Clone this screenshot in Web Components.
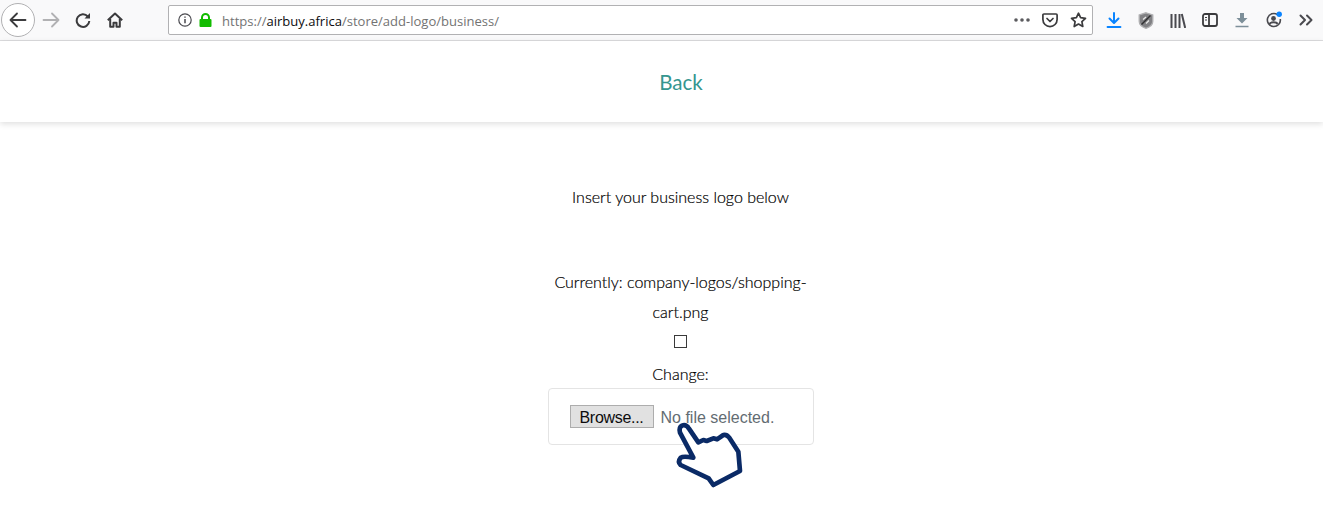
<!DOCTYPE html>
<html>
<head>
<meta charset="utf-8">
<title>Add logo</title>
<style>
  body { margin: 0; padding: 0; background: #fff; }
</style>
</head>
<body>
<browser-toolbar url-host="airbuy.africa" url-path="/store/add-logo/business/"></browser-toolbar>
<site-nav>Back</site-nav>
<logo-form heading="Insert your business logo below"></logo-form>

<script>
// @ts-check

class BrowserToolbar extends HTMLElement {
  constructor() {
    super();
    this._root = this.attachShadow({ mode: "open" });
    const host = this.getAttribute("url-host");
    const path = this.getAttribute("url-path");
    this._root.innerHTML = `
      <style>
        :host {
          display: flex;
          align-items: center;
          height: 40px;
          box-sizing: content-box;
          background: #f9f9fa;
          border-bottom: 1px solid #dcdcde;
          font-family: "Open Sans", "Noto Sans", sans-serif;
        }
        svg { display: block; fill: none; }
        .btn {
          width: 32px;
          height: 32px;
          display: flex;
          align-items: center;
          justify-content: center;
          flex: none;
        }
        #back {
          width: 34px;
          height: 34px;
          margin: 0 0 0 1px;
          box-sizing: border-box;
          border: 1px solid #b1b1b3;
          border-radius: 50%;
          background: #fff;
          display: flex;
          align-items: center;
          justify-content: center;
          flex: none;
        }
        #url {
          flex: 1;
          height: 30px;
          margin: 0 0 0 37px;
          box-sizing: border-box;
          background: #fff;
          border: 1px solid #b1b1b3;
          border-radius: 2px;
          display: flex;
          align-items: center;
          padding-left: 9px;
          padding-right: 0;
          font-size: 13.040px;
          color: #737373;
        }
        #url .text { flex: 1; margin-left: 10px; padding-top: 2px; white-space: nowrap; }
        #url b { font-weight: 400; color: #0c0c0d; }
        #url .in { width: 28px; height: 28px; display: flex; align-items: center; justify-content: center; flex: none; }
        #tools { display: flex; margin-left: 5px; margin-right: 1px; }
      </style>
      <div id="back">
        <svg width="18" height="18" viewBox="0 0 18 18" stroke="#3b3b3d" stroke-width="1.800" stroke-linecap="round" stroke-linejoin="round"><path d="M16.500 9H1.500M8 2.500 1.500 9 8 15.500"/></svg>
      </div>
      <div class="btn">
        <svg width="18" height="18" viewBox="0 0 18 18" stroke="#b1b1b3" stroke-width="1.800" stroke-linecap="round" stroke-linejoin="round"><path d="M1.500 9h15M10 2.500 16.500 9 10 15.500"/></svg>
      </div>
      <div class="btn">
        <svg width="16" height="16" viewBox="0 0 16 16" stroke="#3b3b3d" stroke-width="2" stroke-linejoin="round"><path d="M12.800 4.500A6.300 6.300 0 1 0 14.300 9"/><path d="M15 1v5.500H9.500z" fill="#3b3b3d" stroke="none"/></svg>
      </div>
      <div class="btn">
        <svg width="16" height="16" viewBox="0 0 16 16" stroke="#3b3b3d" stroke-width="2" stroke-linejoin="round"><path d="M.800 8.200 8 1.500l7.200 6.700"/><path d="M3.200 7v7.800h3.300V10.800h3v4h3.300V7"/></svg>
      </div>
      <div id="url">
        <svg width="14" height="14" viewBox="0 0 14 14" stroke="#4a4a4f" stroke-width="1.200"><circle cx="7" cy="7" r="6.200"/><path d="M7 6v4.300M7 3.400v1.400" stroke-width="1.500"/></svg>
        <svg style="margin-left:7px" width="13" height="14" viewBox="0 0 13 14"><path d="M3 6V4.500a3.500 3.500 0 0 1 7 0V6" stroke="#12bc00" stroke-width="2"/><rect x="0.500" y="6" width="12" height="8" rx="1" fill="#12bc00"/></svg>
        <span class="text">https://<b>${host}</b>${path}</span>
        <div class="in">
          <svg width="16" height="4" viewBox="0 0 16 4"><circle cx="2" cy="2" r="1.800" fill="#5b5b5f"/><circle cx="8" cy="2" r="1.800" fill="#5b5b5f"/><circle cx="14" cy="2" r="1.800" fill="#5b5b5f"/></svg>
        </div>
        <div class="in">
          <svg width="16" height="15" viewBox="0 0 16 15" stroke="#3b3b3d" stroke-width="1.700" stroke-linecap="round" stroke-linejoin="round"><path d="M1.900 1h12.200a1 1 0 0 1 1 1v4.500a7.100 7.100 0 0 1-14.200 0V2a1 1 0 0 1 1-1z"/><path d="M5 5.500 8 8.500l3-3"/></svg>
        </div>
        <div class="in">
          <svg width="17" height="16" viewBox="0 0 17 16" stroke="#3b3b3d" stroke-width="1.700" stroke-linejoin="round"><path d="M8.500 1.200 10.600 5.700l4.900.6-3.600 3.300.9 4.900-4.300-2.400-4.300 2.400.9-4.900L1.500 6.300l4.900-.6z"/></svg>
        </div>
      </div>
      <div id="tools">
        <div class="btn">
          <svg width="16" height="16" viewBox="0 0 16 16" stroke="#0a84ff" stroke-width="2" stroke-linecap="round" stroke-linejoin="round"><path d="M8 1v9.500M3.500 6.500 8 11l4.500-4.500"/><path d="M1.500 15h13" stroke-width="1.800"/></svg>
        </div>
        <div class="btn">
          <svg width="16" height="17" viewBox="0 0 16 17"><path d="M8 .8 14.800 3v6.200c0 3.500-3.200 5.900-6.800 7.100-3.600-1.200-6.800-3.600-6.800-7.100V3z" fill="#808083" stroke="#b0b0b2" stroke-width="1.300"/><path d="M3.500 12.500 12.500 3.500" stroke="#2f2f31" stroke-width="1.500" fill="none"/><path d="M5 7.500 8 5M8 11.500l3-3" stroke="#e8e8e8" stroke-width="1.200" fill="none"/></svg>
        </div>
        <div class="btn">
          <svg width="16" height="15" viewBox="0 0 16 15" stroke="#4a4a4f" stroke-width="2"><path d="M1.500 1v14M5.500 1v14M9.500 1v14M11.800 1l3.400 14"/></svg>
        </div>
        <div class="btn">
          <svg width="16" height="14" viewBox="0 0 16 14" stroke="#3b3b3d" stroke-width="1.800"><rect x="1" y="1" width="14" height="12" rx="2"/><path d="M7 1v12"/><path d="M3 4.500h2M3 7h2" stroke-width="1.200"/></svg>
        </div>
        <div class="btn">
          <svg width="16" height="16" viewBox="0 0 16 16"><path d="M6 1h4v5h3.500L8 11.500 2.500 6H6z" fill="#7d8f99"/><path d="M1.500 14.500h13" stroke="#7d8f99" stroke-width="1.500"/></svg>
        </div>
        <div class="btn">
          <svg width="18" height="18" viewBox="0 0 18 18" stroke="#4a4a4f" stroke-width="1.600"><path d="M12.500 3.600A6.500 6.500 0 1 0 15.300 8"/><circle cx="8.500" cy="7.500" r="2.400" fill="#4a4a4f" stroke="none"/><path d="M4.500 13c1-2.300 7-2.300 8 0" stroke-width="2"/><circle cx="14.200" cy="3.300" r="2.700" fill="#0a84ff" stroke="none"/></svg>
        </div>
        <div class="btn">
          <svg width="14" height="12" viewBox="0 0 14 12" stroke="#4a4a4f" stroke-width="2" stroke-linecap="round" stroke-linejoin="round"><path d="M1.500 1.500 6 6l-4.500 4.500M8 1.500 12.500 6 8 10.500"/></svg>
        </div>
      </div>`;
  }
}

class SiteNav extends HTMLElement {
  constructor() {
    super();
    this._root = this.attachShadow({ mode: "open" });
    this._root.innerHTML = `
      <style>
        :host {
          display: flex;
          justify-content: center;
          align-items: center;
          height: 81px;
          padding-left: 39px;
          background: #fff;
          box-shadow: 0 2px 6px rgba(0,0,0,0.13);
          position: relative;
        }
        a {
          font: 20.600px Lato, "Open Sans", sans-serif;
          color: #35968f;
          text-decoration: none;
        }
      </style>
      <a href="#"><slot></slot></a>`;
  }
}

class FileField extends HTMLElement {
  constructor() {
    super();
    this._root = this.attachShadow({ mode: "open" });
    this._root.innerHTML = `
      <style>
        :host {
          display: flex;
          align-items: center;
          position: relative;
          box-sizing: border-box;
          width: 266px;
          height: 57px;
          padding: 0 21px;
          background: #fff;
          border: 1px solid #e4e4e4;
          border-radius: 4px;
          font: 16px "Liberation Sans", Arial, sans-serif;
          -webkit-text-stroke: 0;
          text-align: left;
        }
        button {
          width: 84px;
          height: 23px;
          margin: 0 7px 0 0;
          padding: 2px 0 0;
          font: inherit;
          letter-spacing: -0.3px;
          color: #0c0c0d;
          background: #e1e1e1;
          border: 1px solid #adadad;
          border-radius: 0;
        }
        span { color: #636c72; white-space: nowrap; padding-top: 2px; }
        svg { position: absolute; left: 111px; top: 21px; fill: #fff; overflow: visible; }
      </style>
      <button type="button">Browse...</button><span>No file selected.</span>
      <svg width="95" height="85" viewBox="0 0 285 255" stroke="#0a2a66" stroke-width="14" stroke-linejoin="round" stroke-linecap="round">
        <path d="M60 68Q56 52 66 47Q78 42 87 56L115 97L130 90L140 93L160 85L171 88L190 75Q200 73 207 82L235 125L240 183L160 225L146 205L62 165Q52 155 62 143Q70 138 100 143Z"/>
      </svg>`;
  }
}

class LogoForm extends HTMLElement {
  constructor() {
    super();
    this._root = this.attachShadow({ mode: "open" });
    this._root.innerHTML = `
      <style>
        :host {
          display: flex;
          flex-direction: column;
          align-items: center;
          padding: 0 0 72px 38px;
          font: 300 16px/30px Lato, "Open Sans", sans-serif;
          -webkit-text-stroke: 0.2px #000;
          color: #000;
          text-align: center;
        }
        #heading { margin: 60px 0 55px; }
        #current { width: 266px; }
        input {
          appearance: none;
          display: block;
          width: 13px;
          height: 13px;
          margin: 8px 0 9px;
          background: #fff;
          border: 1px solid #3a3a3a;
          border-radius: 0;
        }
        #change { margin-bottom: -1px; padding-top: 2px; }
      </style>
      <div id="heading"></div>
      <div id="current">Currently: company-logos/shopping-cart.png</div>
      <input type="checkbox">
      <div id="change">Change:</div>
      <file-field></file-field>`;
    this._root.querySelector("#heading").textContent = this.getAttribute("heading");
  }
}

window.customElements.define("browser-toolbar", BrowserToolbar);
window.customElements.define("site-nav", SiteNav);
window.customElements.define("file-field", FileField);
window.customElements.define("logo-form", LogoForm);
</script>
</body>
</html>
